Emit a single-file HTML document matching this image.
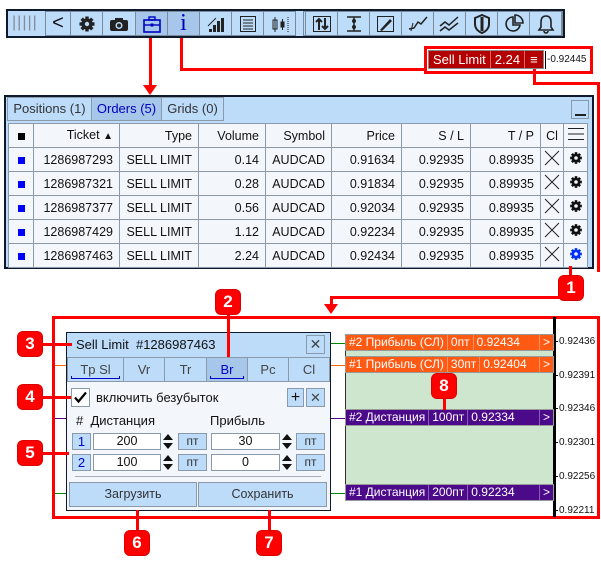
<!DOCTYPE html><html><head><meta charset="utf-8"><style>
*{box-sizing:border-box;margin:0;padding:0}
body{width:601px;height:562px;background:#fff;position:relative;overflow:hidden;font-family:"Liberation Sans","DejaVu Sans",sans-serif;font-size:12px;color:#111}
.a{position:absolute}
.r{position:absolute;background:#f00}
.tb{background:#bcdcfa;border:2px solid #0e1a2c}
.btn{position:absolute;top:11px;height:25px;border:1px solid #7a8a9a;background:#bcdcfa;display:flex;align-items:center;justify-content:center}
.badge{position:absolute;width:24px;height:24px;background:#f00;border-radius:5px;color:#fff;font-weight:bold;font-size:17px;display:flex;align-items:center;justify-content:center;box-shadow:0 0 0 1px #d00}
table{border-collapse:collapse;table-layout:fixed}
td{border:1px solid #8a9aaa;height:24px;padding:0 6px;text-align:right;background:#f3f7fc;font-size:12.5px;line-height:14px;overflow:hidden;white-space:nowrap}
.sq{display:inline-block;width:7px;height:7px;background:#0000ff}
.lab{position:absolute;height:17px;display:flex;color:#fff;font-size:12px;border:1px solid #999;white-space:nowrap;overflow:hidden}
.lab span{border-right:1px solid rgba(255,255,255,.35);padding:0 3px;line-height:15px;white-space:nowrap}
.ax{position:absolute;left:555px;font-size:10px;line-height:10px}
.ax:before{content:"";display:inline-block;width:3px;height:1px;background:#000;vertical-align:middle;margin-right:1px}
.ib{position:absolute;border:1px solid #8a9aaa;background:#fff;text-align:center;font-size:12.5px;line-height:15px;height:17px}
.bb{position:absolute;border:1px solid #8a9aaa;background:#bcdcfa;text-align:center;font-size:12px;line-height:15px;height:17px;color:#333}
.sp{position:absolute;width:14px;height:17px}
.c{text-align:center;padding:0}
</style></head><body>
<svg width="0" height="0" style="position:absolute"><defs>
<g id="gear"><circle cx="9" cy="9" r="5.6"/><rect x="7.3" y="1.5" width="3.4" height="15"/><rect x="7.3" y="1.5" width="3.4" height="15" transform="rotate(45 9 9)"/><rect x="7.3" y="1.5" width="3.4" height="15" transform="rotate(90 9 9)"/><rect x="7.3" y="1.5" width="3.4" height="15" transform="rotate(135 9 9)"/></g>
</defs></svg>

<!-- toolbar -->
<div class="a tb" style="left:6px;top:9px;width:559px;height:29px"></div>
<div class="a" style="left:12px;top:14px;font-size:16px;color:#889;letter-spacing:1px">|||||</div>
<div class="btn" style="left:45px;width:26px;font-size:20px">&lt;</div>
<div class="btn" style="left:70px;width:33px"><svg width="18" height="18" viewBox="0 0 18 18"><use href="#gear" fill="#222"/><circle cx="9" cy="9" r="2.2" fill="#bcdcfa"/></svg></div>
<div class="btn" style="left:102px;width:34px"><svg width="20" height="16"><rect x="1" y="4" width="18" height="11" rx="2" fill="#222"/><rect x="6" y="2" width="8" height="3" fill="#222"/><circle cx="10" cy="9.5" r="3.5" fill="#bcdcfa"/><circle cx="10" cy="9.5" r="2" fill="#222"/></svg></div>
<div class="btn" style="left:135px;width:33px;background:#a6c6ea"><svg width="20" height="18"><rect x="2" y="5" width="16" height="12" fill="none" stroke="#0000c0" stroke-width="1.6"/><rect x="7" y="2" width="6" height="3" fill="none" stroke="#0000c0" stroke-width="1.4"/><line x1="2" y1="10" x2="18" y2="10" stroke="#0000c0" stroke-width="1.4"/><rect x="8.5" y="8.5" width="3" height="3" fill="#0000c0"/></svg></div>
<div class="btn" style="left:167px;width:33px;background:#a6c6ea;font-family:'Liberation Serif',serif;font-size:24px;color:#0000c0">i</div>
<div class="btn" style="left:199px;width:33px"><svg width="20" height="18"><rect x="3" y="14" width="3" height="3" fill="#222"/><rect x="7" y="10" width="3" height="7" fill="#222"/><rect x="11" y="6" width="3" height="11" fill="#222"/><rect x="15" y="3" width="3" height="14" fill="#222"/><line x1="2" y1="11" x2="10" y2="3" stroke="#222"/></svg></div>
<div class="btn" style="left:231px;width:33px"><svg width="18" height="18"><rect x="1.5" y="1.5" width="15" height="15" fill="none" stroke="#222"/><g stroke="#222"><line x1="4" y1="5" x2="14" y2="5"/><line x1="4" y1="8" x2="14" y2="8"/><line x1="4" y1="11" x2="14" y2="11"/><line x1="4" y1="14" x2="14" y2="14"/></g></svg></div>
<div class="btn" style="left:263px;width:33px"><svg width="20" height="18"><g stroke="#222" fill="none"><rect x="3" y="5" width="4" height="9"/><line x1="5" y1="2" x2="5" y2="17"/><rect x="11" y="7" width="3" height="5" fill="#222"/><line x1="12.5" y1="4" x2="12.5" y2="15"/><line x1="18" y1="2" x2="18" y2="17" stroke-dasharray="1 1"/></g></svg></div>
<div class="a" style="left:303px;top:11px;width:260px;height:25px;border:1px solid #7a8a9a"></div>
<div class="btn" style="left:305px;width:33px"><svg width="20" height="18"><rect x="1.5" y="1.5" width="17" height="15" fill="none" stroke="#222"/><path d="M7 15V5M4 7l3-3 3 3M13 3v10M10 11l3 3 3-3" stroke="#222" stroke-width="2" fill="none"/></svg></div>
<div class="btn" style="left:337px;width:33px"><svg width="20" height="18"><path d="M3 2h14M3 16h14M10 2v14" stroke="#222" stroke-width="1.5"/><circle cx="10" cy="6" r="2" fill="#222"/><circle cx="10" cy="12" r="2" fill="#222"/></svg></div>
<div class="btn" style="left:369px;width:33px"><svg width="20" height="18"><rect x="1.5" y="1.5" width="16" height="15" fill="none" stroke="#222"/><path d="M4 15L14 4l2 2L6 16z" fill="#222"/></svg></div>
<div class="btn" style="left:401px;width:33px"><svg width="22" height="18"><path d="M2 14l5-1 4-6 3 2 6-7" stroke="#222" stroke-width="1.5" fill="none"/><path d="M4 16L6 8" stroke="#222"/></svg></div>
<div class="btn" style="left:433px;width:33px"><svg width="22" height="18"><path d="M1 11l5-4 4 3 9-8M1 16l5-4 4 3 9-7" stroke="#222" stroke-width="1.5" fill="none"/></svg></div>
<div class="btn" style="left:465px;width:33px"><svg width="18" height="20"><path d="M9 1L2 4v6c0 5 4 8 7 9 3-1 7-4 7-9V4z" fill="none" stroke="#222" stroke-width="2"/><path d="M9 3v14" stroke="#222" stroke-width="3"/></svg></div>
<div class="btn" style="left:497px;width:33px"><svg width="20" height="20"><path d="M9 3a7 7 0 1 0 7 8H9z" fill="none" stroke="#222" stroke-width="1.6"/><path d="M11 1v8h8a8 8 0 0 0-8-8z" fill="none" stroke="#222" stroke-width="1.6"/></svg></div>
<div class="btn" style="left:529px;width:33px"><svg width="18" height="20"><path d="M9 2c-4 0-5 3-5 6v5l-2 3h14l-2-3V8c0-3-1-6-5-6zM7 17a2 2 0 0 0 4 0" fill="none" stroke="#222" stroke-width="1.6"/></svg></div>

<!-- connectors top -->
<div class="r" style="left:149px;top:38px;width:3px;height:52px"></div>
<div class="a" style="left:143px;top:85px;width:0;height:0;border-left:7px solid transparent;border-right:7px solid transparent;border-top:10px solid #f00"></div>
<div class="r" style="left:180px;top:38px;width:3px;height:33px"></div>
<div class="r" style="left:180px;top:68px;width:246px;height:3px"></div>
<div class="a" style="left:424px;top:46px;width:169px;height:28px;border:3px solid #f00"></div>
<div class="a" style="left:428px;top:50px;height:19px;background:#b40000;border:1px solid #888;color:#fff;font-size:13px;display:flex;line-height:17px;white-space:nowrap">
<span style="padding:0 4px;border-right:1px solid #d66">Sell Limit</span><span style="padding:0 4px;border-right:1px solid #d66">2.24</span><span style="padding:0 5px">≡</span></div>
<div class="a" style="left:545px;top:51px;width:1px;height:18px;background:#000"></div>
<div class="a" style="left:547px;top:54px;font-size:10px">-0.92445</div>
<div class="r" style="left:533px;top:69px;width:3px;height:16px"></div>
<div class="r" style="left:533px;top:82px;width:67px;height:3px"></div>
<div class="r" style="left:597px;top:82px;width:3px;height:190px"></div>

<!-- orders panel -->
<div class="a" style="left:4px;top:95px;width:590px;height:174px;background:#bcdcfa;border:2px solid #0e1a2c"></div>
<div class="a" style="left:7px;top:97px;width:85px;height:24px;border:1px solid #8a9aaa;font-size:13px;color:#333;text-align:center;line-height:22px">Positions (1)</div>
<div class="a" style="left:91px;top:97px;width:71px;height:24px;border:1px solid #8a9aaa;background:#a6c6ea;font-size:13px;color:#0000c0;text-align:center;line-height:22px">Orders (5)</div>
<div class="a" style="left:161px;top:97px;width:63px;height:24px;border:1px solid #8a9aaa;font-size:13px;color:#333;text-align:center;line-height:22px">Grids (0)</div>
<div class="a" style="left:571px;top:100px;width:18px;height:19px;border:1px solid #8a9aaa;background:#bcdcfa"><div class="a" style="left:3px;top:13px;width:11px;height:2px;background:#222"></div></div>
<table class="a" style="left:8px;top:123px;width:580px">
<colgroup><col style="width:25px"><col style="width:86px"><col style="width:79px"><col style="width:67px"><col style="width:66px"><col style="width:70px"><col style="width:69px"><col style="width:70px"><col style="width:23px"><col></colgroup>
<tr><td class="c"><span class="sq" style="background:#000"></span></td><td>Ticket <span style="font-size:10px">▲</span></td><td>Type</td><td>Volume</td><td>Symbol</td><td>Price</td><td>S / L</td><td>T / P</td><td class="c">Cl</td><td class="c"><svg width="18" height="14"><path d="M1 1.5h16M1 7h16M1 12.5h16" stroke="#222"/></svg></td></tr>
<tr><td class="c"><span class="sq"></span></td><td>1286987293</td><td>SELL LIMIT</td><td>0.14</td><td>AUDCAD</td><td>0.91634</td><td>0.92935</td><td>0.89935</td><td class="c"><svg width="16" height="16"><path d="M1 1L15 15M15 1L1 15" stroke="#222"/></svg></td><td class="c"><svg width="14" height="14" viewBox="0 0 18 18"><use href="#gear" fill="#111"/><circle cx="9" cy="9" r="2.3" fill="#f3f7fc"/></svg></td></tr>
<tr><td class="c"><span class="sq"></span></td><td>1286987321</td><td>SELL LIMIT</td><td>0.28</td><td>AUDCAD</td><td>0.91834</td><td>0.92935</td><td>0.89935</td><td class="c"><svg width="16" height="16"><path d="M1 1L15 15M15 1L1 15" stroke="#222"/></svg></td><td class="c"><svg width="14" height="14" viewBox="0 0 18 18"><use href="#gear" fill="#111"/><circle cx="9" cy="9" r="2.3" fill="#f3f7fc"/></svg></td></tr>
<tr><td class="c"><span class="sq"></span></td><td>1286987377</td><td>SELL LIMIT</td><td>0.56</td><td>AUDCAD</td><td>0.92034</td><td>0.92935</td><td>0.89935</td><td class="c"><svg width="16" height="16"><path d="M1 1L15 15M15 1L1 15" stroke="#222"/></svg></td><td class="c"><svg width="14" height="14" viewBox="0 0 18 18"><use href="#gear" fill="#111"/><circle cx="9" cy="9" r="2.3" fill="#f3f7fc"/></svg></td></tr>
<tr><td class="c"><span class="sq"></span></td><td>1286987429</td><td>SELL LIMIT</td><td>1.12</td><td>AUDCAD</td><td>0.92234</td><td>0.92935</td><td>0.89935</td><td class="c"><svg width="16" height="16"><path d="M1 1L15 15M15 1L1 15" stroke="#222"/></svg></td><td class="c"><svg width="14" height="14" viewBox="0 0 18 18"><use href="#gear" fill="#111"/><circle cx="9" cy="9" r="2.3" fill="#f3f7fc"/></svg></td></tr>
<tr><td class="c"><span class="sq"></span></td><td>1286987463</td><td>SELL LIMIT</td><td>2.24</td><td>AUDCAD</td><td>0.92434</td><td>0.92935</td><td>0.89935</td><td class="c"><svg width="16" height="16"><path d="M1 1L15 15M15 1L1 15" stroke="#222"/></svg></td><td class="c"><svg width="14" height="14" viewBox="0 0 18 18"><use href="#gear" fill="#0030ff"/><circle cx="9" cy="9" r="2.3" fill="#f3f7fc"/></svg></td></tr>
</table>

<!-- badge 1 and connectors -->
<div class="r" style="left:569px;top:266px;width:3px;height:14px"></div>
<div class="badge" style="left:559px;top:276px">1</div>
<div class="r" style="left:330px;top:296px;width:232px;height:3px"></div>
<div class="r" style="left:330px;top:296px;width:3px;height:12px"></div>
<div class="a" style="left:324px;top:304px;width:0;height:0;border-left:7px solid transparent;border-right:7px solid transparent;border-top:10px solid #f00"></div>

<!-- big red box -->
<div class="a" style="left:52px;top:316px;width:548px;height:203px;border:3px solid #f00"></div>

<!-- chart right -->
<div class="a" style="left:553px;top:317px;width:3px;height:200px;background:#000"></div>
<div class="a" style="left:345px;top:350px;width:208px;height:150px;background:#cde6cd;border-left:1px solid #333"></div>
<div class="a" style="left:330px;top:343px;width:15px;height:1px;background:#080"></div>
<div class="a" style="left:330px;top:365px;width:15px;height:1px;background:#f60"></div>
<div class="a" style="left:330px;top:418px;width:15px;height:1px;background:#508"></div>
<div class="a" style="left:330px;top:493px;width:15px;height:1px;background:#080"></div>
<div class="lab" style="left:345px;top:334px;width:209px;background:#ff5a14"><span>#2 Прибыль (СЛ)</span><span>0пт</span><span style="flex:1">0.92434</span><span style="border:0">&gt;</span></div>
<div class="lab" style="left:345px;top:356px;width:209px;background:#ff5a14"><span>#1 Прибыль (СЛ)</span><span>30пт</span><span style="flex:1">0.92404</span><span style="border:0">&gt;</span></div>
<div class="lab" style="left:345px;top:409px;width:209px;background:#4b0a8a"><span>#2 Дистанция</span><span>100пт</span><span style="flex:1">0.92334</span><span style="border:0">&gt;</span></div>
<div class="lab" style="left:345px;top:484px;width:209px;background:#4b0a8a"><span>#1 Дистанция</span><span>200пт</span><span style="flex:1">0.92234</span><span style="border:0">&gt;</span></div>
<div class="ax" style="top:337px">0.92436</div>
<div class="ax" style="top:371px">0.92391</div>
<div class="ax" style="top:404px">0.92346</div>
<div class="ax" style="top:438px">0.92301</div>
<div class="ax" style="top:472px">0.92256</div>
<div class="ax" style="top:506px">0.92211</div>
<div class="r" style="left:443px;top:395px;width:3px;height:15px"></div>
<div class="badge" style="left:432px;top:374px">8</div>
<div class="a" style="left:55px;top:365px;width:11px;height:1px;background:#f60"></div>
<div class="a" style="left:55px;top:418px;width:11px;height:1px;background:#508"></div>
<div class="a" style="left:55px;top:493px;width:11px;height:1px;background:#080"></div>

<!-- dialog -->
<div class="a" style="left:66px;top:332px;width:265px;height:179px;background:#f3f7fc;border:1px solid #0e1a2c"></div>
<div class="a" style="left:67px;top:333px;width:263px;height:48px;background:#bcdcfa"></div>
<div class="a" style="left:76px;top:337px;font-size:13px;white-space:nowrap">Sell Limit&nbsp; #1286987463</div>
<div class="a" style="left:306px;top:335px;width:19px;height:19px;border:1px solid #8a9aaa;text-align:center;line-height:17px;font-size:14px;color:#444">✕</div>
<div class="a" style="left:67px;top:357px;width:263px;height:25px;border:1px solid #8a9aaa;display:flex;font-size:13px;color:#444">
<div style="width:56px;text-align:center;line-height:23px;border-right:1px solid #8a9aaa;position:relative">Tp Sl<div class="a" style="left:3px;right:3px;bottom:2px;height:3px;border:1px solid #00c;border-top:0"></div></div>
<div style="width:41px;text-align:center;line-height:23px;border-right:1px solid #8a9aaa">Vr</div>
<div style="width:42px;text-align:center;line-height:23px;border-right:1px solid #8a9aaa">Tr</div>
<div style="width:41px;text-align:center;line-height:23px;border-right:1px solid #8a9aaa;background:#a6c6ea;color:#00c;position:relative">Br<div class="a" style="left:3px;right:3px;bottom:2px;height:3px;border:1px solid #00c;border-top:0"></div></div>
<div style="width:41px;text-align:center;line-height:23px;border-right:1px solid #8a9aaa">Pc</div>
<div style="flex:1;text-align:center;line-height:23px">Cl</div></div>
<div class="a" style="left:71px;top:388px;width:19px;height:19px;border:1px solid #8a9aaa;background:#fff"><svg width="17" height="17"><path d="M3 8.5l3.5 4L14 3.5" stroke="#000" stroke-width="2.2" fill="none"/></svg></div>
<div class="a" style="left:96px;top:390px;font-size:13px">включить безубыток</div>
<div class="a" style="left:287px;top:388px;width:17px;height:19px;border:1px solid #8a9aaa;background:#bcdcfa;text-align:center;font-size:16px;line-height:17px">+</div>
<div class="a" style="left:306px;top:388px;width:19px;height:19px;border:1px solid #8a9aaa;background:#bcdcfa;text-align:center;font-size:13px;line-height:17px;color:#444">✕</div>
<div class="a" style="left:76px;top:413px;font-size:13px">#&nbsp; Дистанция</div>
<div class="a" style="left:210px;top:413px;font-size:13px">Прибыль</div>

<div class="bb" style="left:72px;top:433px;width:19px;color:#00c;font-size:13px">1</div>
<div class="ib" style="left:93px;top:433px;width:68px">200</div>
<svg class="sp" style="left:161px;top:433px"><path d="M2 7L7 1l5 6zM2 10l5 6 5-6z" fill="#111"/></svg>
<div class="bb" style="left:178px;top:433px;width:29px">пт</div>
<div class="ib" style="left:211px;top:433px;width:69px">30</div>
<svg class="sp" style="left:280px;top:433px"><path d="M2 7L7 1l5 6zM2 10l5 6 5-6z" fill="#111"/></svg>
<div class="bb" style="left:296px;top:433px;width:29px">пт</div>

<div class="bb" style="left:72px;top:454px;width:19px;color:#00c;font-size:13px">2</div>
<div class="ib" style="left:93px;top:454px;width:68px">100</div>
<svg class="sp" style="left:161px;top:454px"><path d="M2 7L7 1l5 6zM2 10l5 6 5-6z" fill="#111"/></svg>
<div class="bb" style="left:178px;top:454px;width:29px">пт</div>
<div class="ib" style="left:211px;top:454px;width:69px">0</div>
<svg class="sp" style="left:280px;top:454px"><path d="M2 7L7 1l5 6zM2 10l5 6 5-6z" fill="#111"/></svg>
<div class="bb" style="left:296px;top:454px;width:29px">пт</div>
<div class="a" style="left:75px;top:476px;width:246px;height:1px;background:#aab"></div>
<div class="bb" style="left:69px;top:482px;width:128px;height:25px;line-height:23px;font-size:12.5px">Загрузить</div>
<div class="bb" style="left:198px;top:482px;width:129px;height:25px;line-height:23px;font-size:12.5px">Сохранить</div>

<!-- badges -->
<div class="r" style="left:227px;top:310px;width:3px;height:47px"></div>
<div class="badge" style="left:216px;top:290px">2</div>
<div class="badge" style="left:18px;top:332px">3</div>
<div class="r" style="left:40px;top:343px;width:32px;height:3px"></div>
<div class="badge" style="left:18px;top:385px">4</div>
<div class="r" style="left:40px;top:396px;width:31px;height:3px"></div>
<div class="badge" style="left:18px;top:441px">5</div>
<div class="r" style="left:40px;top:452px;width:29px;height:3px"></div>
<div class="r" style="left:136px;top:510px;width:3px;height:22px"></div>
<div class="badge" style="left:125px;top:531px">6</div>
<div class="r" style="left:268px;top:510px;width:3px;height:22px"></div>
<div class="badge" style="left:257px;top:531px">7</div>
</body></html>
